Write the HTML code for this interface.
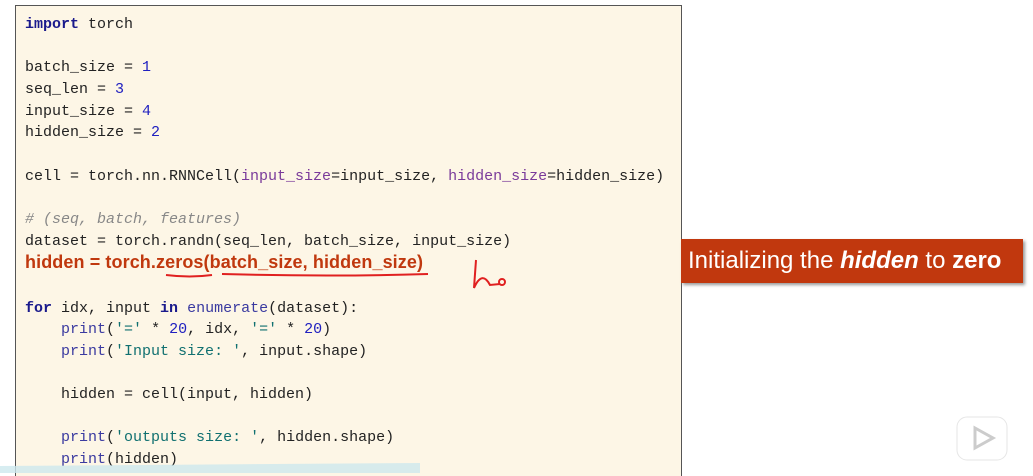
<!DOCTYPE html>
<html><head><style>
body{margin:0;width:1033px;height:473px;background:#fff;position:relative;overflow:hidden}
.box{position:absolute;left:15px;top:5px;width:665px;height:470px;background:#fdf6e6;border:1px solid #555;border-bottom:none}
.code{position:absolute;left:25px;top:14px;font:15px/21.65px "Liberation Mono","Noto Serif CJK SC",monospace;color:#222;white-space:pre}
.k{color:#1a1a8c;font-weight:bold}.n{color:#2020c0}.p{color:#7a3a9a}.f{color:#3a3aa0}.s{color:#107070}.c{color:#888;font-style:italic}
.red{color:#c0380e;font:bold 18px "Liberation Sans",sans-serif;letter-spacing:0.1px}
.banner{position:absolute;left:681px;top:239px;width:342px;height:44px;background:#c1380e;color:#fff;font:24px/44px "Liberation Sans",sans-serif;box-shadow:2px 2px 3px #999;text-indent:7px;white-space:nowrap}
</style></head><body>
<div class="box"></div>
<div class="code"><span class="k">import</span> torch

batch_size = <span class="n">1</span>
seq_len = <span class="n">3</span>
input_size = <span class="n">4</span>
hidden_size = <span class="n">2</span>

cell = torch.nn.RNNCell(<span class="p">input_size</span>=input_size, <span class="p">hidden_size</span>=hidden_size)

<span class="c"># (seq, batch, features)</span>
dataset = torch.randn(seq_len, batch_size, input_size)
<span class="red">hidden = torch.zeros(batch_size, hidden_size)</span>

<span class="k">for</span> idx, input <span class="k">in</span> <span class="f">enumerate</span>(dataset):
    <span class="f">print</span>(<span class="s">'='</span> * <span class="n">20</span>, idx, <span class="s">'='</span> * <span class="n">20</span>)
    <span class="f">print</span>(<span class="s">'Input size: '</span>, input.shape)

    hidden = cell(input, hidden)

    <span class="f">print</span>(<span class="s">'outputs size: '</span>, hidden.shape)
    <span class="f">print</span>(hidden)</div>
<svg style="position:absolute;left:0;top:0" width="1033" height="473">
<path d="M166 275 Q190 278 212 275" stroke="#e02020" stroke-width="2" fill="none"/>
<path d="M222 274 Q330 277 428 274" stroke="#e02020" stroke-width="2" fill="none"/>
<path d="M476 260 L474 288 Q482 270 490 285 L500 284" stroke="#e02020" stroke-width="2" fill="none"/>
<circle cx="502" cy="282" r="3" stroke="#e02020" stroke-width="2" fill="none"/>
<path d="M0 466 L420 463 L420 473 L0 473Z" fill="#cde8ee" opacity=".8"/>
<rect x="957" y="417" width="50" height="43" rx="10" fill="#fff" stroke="#e4e4e4" opacity=".9"/>
<path d="M975 428 L993 438 L975 448Z" fill="none" stroke="#ccc" stroke-width="3"/>
</svg>
<div class="banner">Initializing the <b><i>hidden</i></b> to <b>zero</b></div>
</body></html>
